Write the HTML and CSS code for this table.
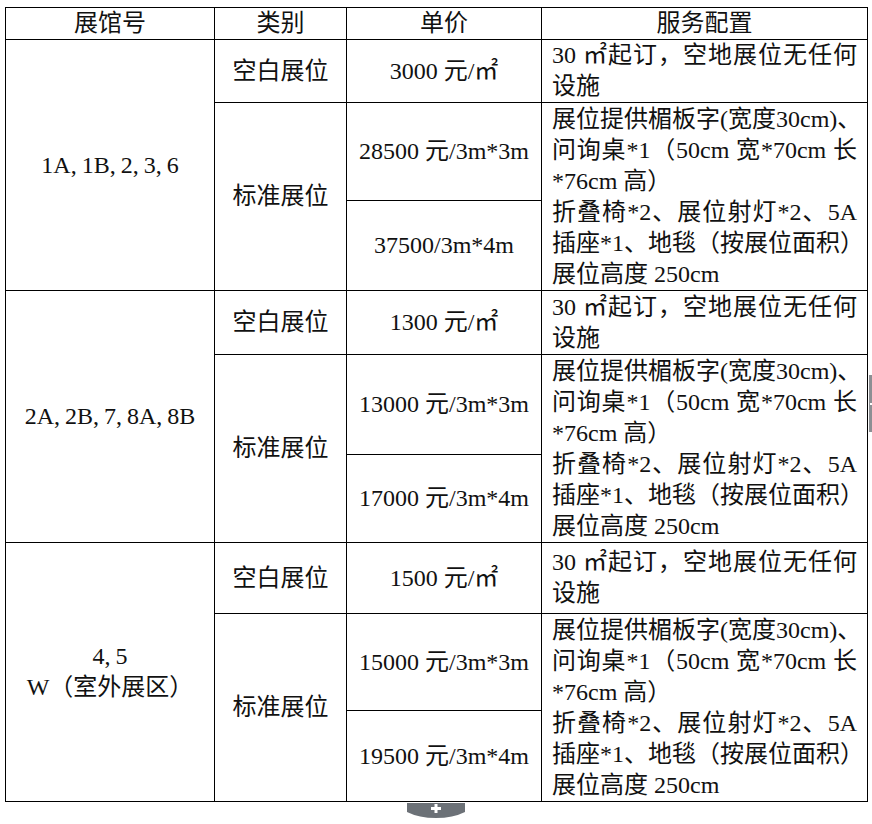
FILE: index.html
```html
<!DOCTYPE html>
<html lang="zh-CN">
<head>
<meta charset="utf-8">
<title>展位价格</title>
<link rel="stylesheet" href="styles.css">
</head>
<body>
<table class="grid">
  <colgroup><col class="c1"><col class="c2"><col class="c3"><col class="c4"></colgroup>
  <tr class="rh"><th>展馆号</th><th>类别</th><th>单价</th><th>服务配置</th></tr>

  <tr class="g1a">
    <td rowspan="3" class="hall">1A, 1B, 2, 3, 6</td>
    <td>空白展位</td>
    <td>3000 元/㎡</td>
    <td class="svc"><div class="ln j">30 ㎡起订，空地展位无任何</div><div class="ln">设施</div></td>
  </tr>
  <tr class="g1b">
    <td rowspan="2">标准展位</td>
    <td>28500 元/3m*3m</td>
    <td rowspan="2" class="svc">
      <div class="ln j">展位提供楣板字(宽度30cm)、</div>
      <div class="ln j">问询桌*1（50cm 宽*70cm 长</div>
      <div class="ln">*76cm 高）</div>
      <div class="ln j">折叠椅*2、展位射灯*2、5A</div>
      <div class="ln j">插座*1、地毯（按展位面积）</div>
      <div class="ln">展位高度 250cm</div>
    </td>
  </tr>
  <tr class="g1c"><td>37500/3m*4m</td></tr>

  <tr class="g2a">
    <td rowspan="3" class="hall">2A, 2B, 7, 8A, 8B</td>
    <td>空白展位</td>
    <td>1300 元/㎡</td>
    <td class="svc"><div class="ln j">30 ㎡起订，空地展位无任何</div><div class="ln">设施</div></td>
  </tr>
  <tr class="g2b">
    <td rowspan="2">标准展位</td>
    <td>13000 元/3m*3m</td>
    <td rowspan="2" class="svc">
      <div class="ln j">展位提供楣板字(宽度30cm)、</div>
      <div class="ln j">问询桌*1（50cm 宽*70cm 长</div>
      <div class="ln">*76cm 高）</div>
      <div class="ln j">折叠椅*2、展位射灯*2、5A</div>
      <div class="ln j">插座*1、地毯（按展位面积）</div>
      <div class="ln">展位高度 250cm</div>
    </td>
  </tr>
  <tr class="g2c"><td>17000 元/3m*4m</td></tr>

  <tr class="g3a">
    <td rowspan="3" class="hall"><div class="ln">4, 5</div><div class="ln">W（室外展区）</div></td>
    <td>空白展位</td>
    <td>1500 元/㎡</td>
    <td class="svc"><div class="ln j">30 ㎡起订，空地展位无任何</div><div class="ln">设施</div></td>
  </tr>
  <tr class="g3b">
    <td rowspan="2">标准展位</td>
    <td>15000 元/3m*3m</td>
    <td rowspan="2" class="svc">
      <div class="ln j">展位提供楣板字(宽度30cm)、</div>
      <div class="ln j">问询桌*1（50cm 宽*70cm 长</div>
      <div class="ln">*76cm 高）</div>
      <div class="ln j">折叠椅*2、展位射灯*2、5A</div>
      <div class="ln j">插座*1、地毯（按展位面积）</div>
      <div class="ln">展位高度 250cm</div>
    </td>
  </tr>
  <tr class="g3c"><td>19500 元/3m*4m</td></tr>
</table>

<div class="side-tab"><span class="side-tick"></span></div>
<div class="add-tab">
  <svg class="add-shape" width="58" height="15" viewBox="0 0 58 15">
    <path d="M0 0 H58 V9 Q46 15 29 15 Q12 15 0 9 Z" fill="#6c7177"/>
    <rect x="24" y="4" width="10" height="3" fill="#fff"/>
    <rect x="27.5" y="1" width="3" height="9" fill="#fff"/>
  </svg>
</div>
</body>
</html>
```

FILE: styles.css
```css
html, body {
  margin: 0;
  padding: 0;
  background: #ffffff;
}

body {
  width: 872px;
  height: 824px;
  position: relative;
  overflow: hidden;
  color: #111111;
  font-family: "Liberation Serif", "Noto Sans CJK SC", serif;
  font-size: 24px;
}

.grid {
  margin: 7px 0 0 5px;
  width: 862px;
  table-layout: fixed;
  border-collapse: collapse;
}

.c1 { width: 209px; }
.c2 { width: 132px; }
.c3 { width: 195px; }
.c4 { width: 326px; }

.grid th,
.grid td {
  border: 1px solid #000000;
  padding: 0;
  text-align: center;
  vertical-align: middle;
  font-weight: normal;
  line-height: 31px;
  white-space: nowrap;
}

.grid td.hall {
  word-spacing: -1px;
}

.grid td.svc {
  text-align: left;
  padding: 0 10px 0 10px;
}

.ln {
  display: block;
  white-space: nowrap;
}

.j {
  text-align: justify;
  text-align-last: justify;
}

.rh { height: 32px; }

.g1a { height: 63px; }
.g1b { height: 98px; }
.g1c { height: 90px; }

.g2a { height: 64px; }
.g2b { height: 100px; }
.g2c { height: 88px; }

.g3a { height: 71px; }
.g3b { height: 97px; }
.g3c { height: 91px; }

.side-tab {
  position: absolute;
  left: 869px;
  top: 375px;
  width: 3px;
  height: 57px;
  background: #8c8f93;
}

.side-tick {
  position: absolute;
  left: 1px;
  top: 28px;
  width: 2px;
  height: 2px;
  background: #ffffff;
}

.add-tab {
  position: absolute;
  left: 407px;
  top: 803px;
  width: 58px;
  height: 15px;
}

.add-shape {
  display: block;
}
```
